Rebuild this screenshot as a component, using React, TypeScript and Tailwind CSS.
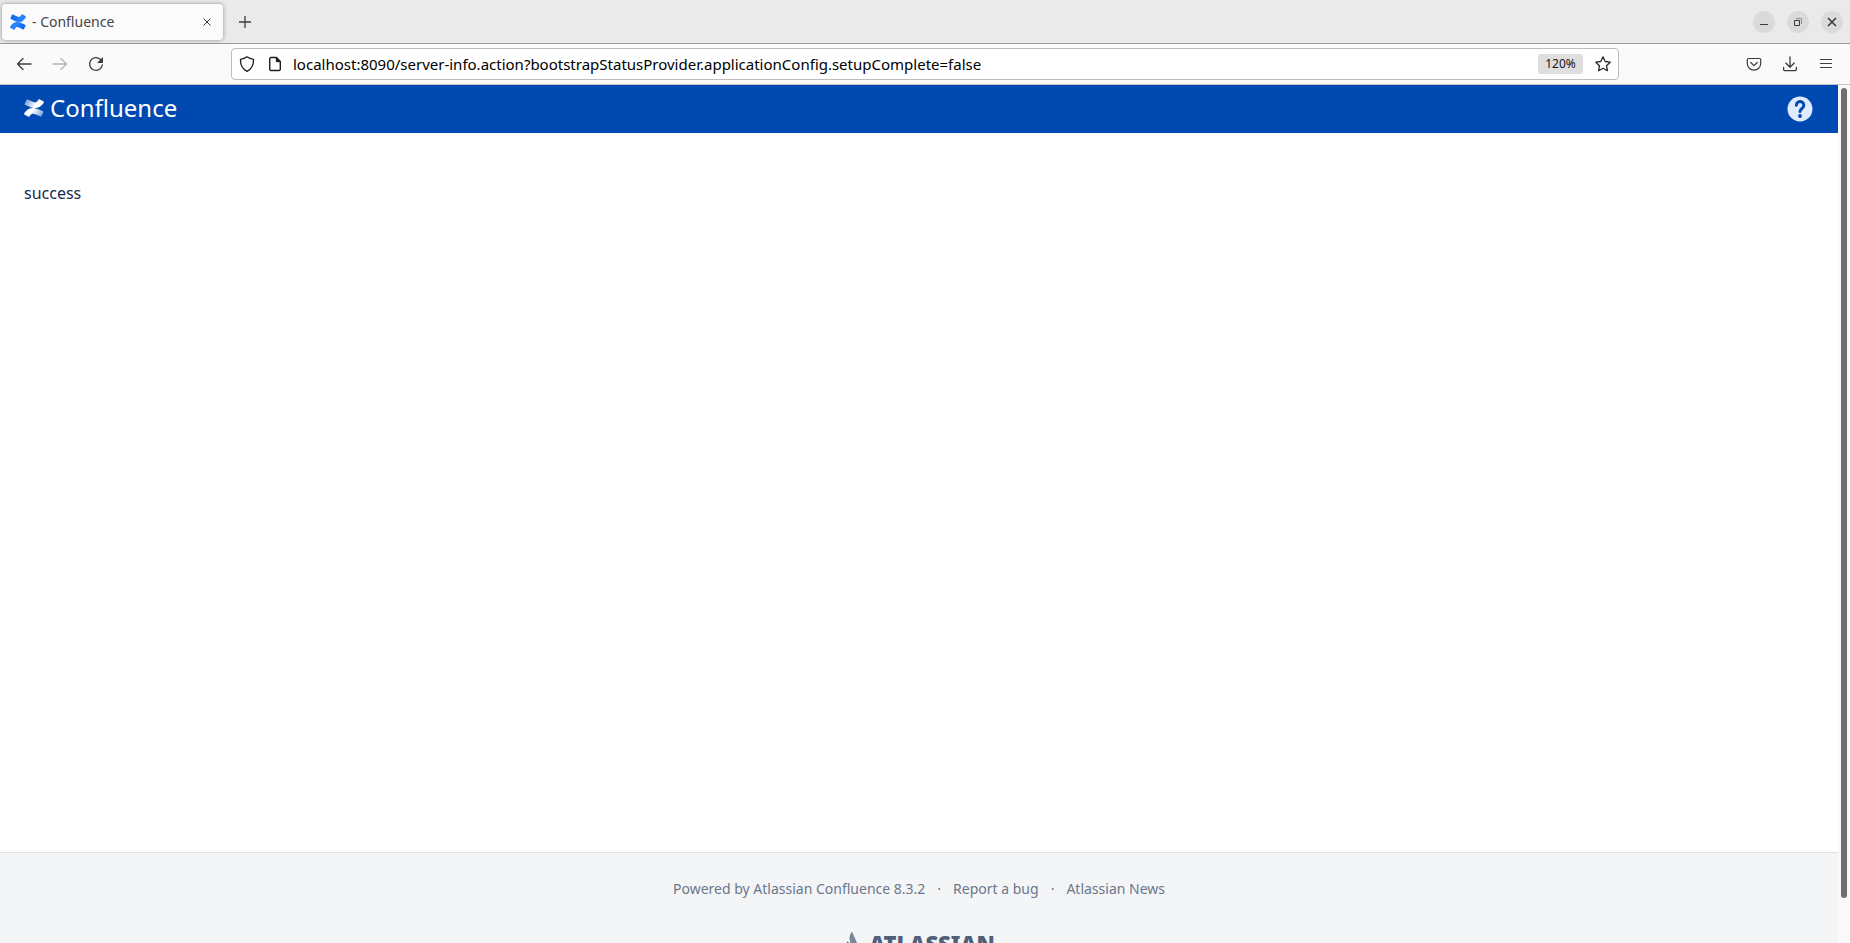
import { useState } from "react";

const ICON = "fill-none stroke-[#3c3c3f]";

function ConfluenceMark({ id, from, to, className }: { id: string; from: string; to: string; className: string }) {
  return (
    <svg className={className} viewBox="0 0 32 32" preserveAspectRatio="none" aria-hidden="true">
      <defs>
        <linearGradient id={`${id}-a`} x1="31" y1="33" x2="11" y2="20" gradientUnits="userSpaceOnUse">
          <stop offset="0.1" stopColor={from} />
          <stop offset="0.9" stopColor={to} />
        </linearGradient>
        <linearGradient id={`${id}-b`} x1="1" y1="-1" x2="21" y2="12" gradientUnits="userSpaceOnUse">
          <stop offset="0.1" stopColor={from} />
          <stop offset="0.9" stopColor={to} />
        </linearGradient>
      </defs>
      <path
        fill={`url(#${id}-a)`}
        d="M1.2 24.2c-.4.6-.8 1.3-1 1.8-.3.5-.1 1.2.4 1.5l6.700 4.100c.5.300 1.200.200 1.500-.4.300-.5.600-1.100 1-1.700 2.600-4.300 5.300-3.800 10-1.600l6.600 3.100c.6.300 1.200 0 1.500-.5l3.200-7.200c.200-.6 0-1.200-.6-1.500-1.400-.6-4.200-2-6.600-3.100C14.800 14.300 7.300 14.600 1.200 24.200z"
      />
      <path
        fill={`url(#${id}-b)`}
        d="M30.800 7.800c.4-.6.800-1.300 1-1.800.3-.5.100-1.200-.4-1.500L24.700.4c-.5-.3-1.200-.2-1.500.4-.3.500-.6 1.100-1 1.700-2.600 4.300-5.300 3.800-10 1.600L5.600 1c-.6-.3-1.200 0-1.500.5L.9 8.700c-.2.600 0 1.200.6 1.500 1.400.6 4.200 2 6.600 3.100 9.100 4.400 16.600 4.100 22.700-5.500z"
      />
    </svg>
  );
}

function TabStrip() {
  return (
    <div className="flex h-11 shrink-0 items-center border-b border-[#9c9c9c] bg-[#eaeaea] pl-0.5 pr-[7px]">
      <div className="flex h-9 w-[221px] items-center rounded bg-[#fbfbfb] pl-2 pr-1.5 shadow-[0_0_4px_rgba(0,0,0,0.4)]">
        <ConfluenceMark id="tab" from="#0c5fe8" to="#2684ff" className="h-4 w-4" />
        <span className="ml-1.5 flex-1 text-sm text-[#45454a]">- Confluence</span>
        <button aria-label="Close tab" className="flex h-5 w-5 items-center justify-center">
          <svg className={`h-2 w-2 ${ICON}`} viewBox="0 0 8 8"><path d="M.5.5l7 7M7.500.5l-7 7" /></svg>
        </button>
      </div>
      <button aria-label="New tab" className="ml-4 flex h-3 w-3 items-center justify-center">
        <svg className={`h-3 w-3 ${ICON}`} viewBox="0 0 12 12"><path strokeWidth="1.3" d="M6 0v12M0 6h12" /></svg>
      </button>
      <div className="ml-auto flex gap-3">
        <button aria-label="Minimize" className="flex h-[22px] w-[22px] items-center justify-center rounded-full bg-[#dadada]">
          <svg className={`h-3 w-3 ${ICON}`} viewBox="0 0 12 12"><path d="M2 8.500h8" /></svg>
        </button>
        <button aria-label="Restore" className="flex h-[22px] w-[22px] items-center justify-center rounded-full bg-[#dadada]">
          <svg className={`h-3 w-3 ${ICON}`} viewBox="0 0 12 12">
            <path d="M2.500 4.500h5v5h-5z" />
            <path className="stroke-[#8b8b8b]" d="M4 2.500h5.500V8" />
          </svg>
        </button>
        <button aria-label="Close window" className="flex h-[22px] w-[22px] items-center justify-center rounded-full bg-[#dadada]">
          <svg className={`h-3 w-3 ${ICON}`} viewBox="0 0 12 12"><path strokeWidth="1.6" d="M2 2l8 8M10 2l-8 8" /></svg>
        </button>
      </div>
    </div>
  );
}

function NavBar() {
  const [url, setUrl] = useState("localhost:8090/server-info.action?bootstrapStatusProvider.applicationConfig.setupComplete=false");

  return (
    <div className="flex h-[41px] shrink-0 items-center border-b border-[#c4c4c4] bg-[#fafafa] px-4">
      <div className="flex gap-5">
        <button aria-label="Back">
          <svg className={`h-4 w-4 ${ICON}`} viewBox="0 0 16 16"><path strokeWidth="1.3" strokeLinecap="round" strokeLinejoin="round" d="M15 8H1.500M7 2.500L1.500 8 7 13.500" /></svg>
        </button>
        <button aria-label="Forward" disabled>
          <svg className="h-4 w-4 fill-none stroke-[#b4b4b4]" viewBox="0 0 16 16"><path strokeWidth="1.3" strokeLinecap="round" strokeLinejoin="round" d="M1 8h13.500M9 2.500L14.500 8 9 13.500" /></svg>
        </button>
        <button aria-label="Reload">
          <svg className={`h-4 w-4 ${ICON}`} viewBox="0 0 16 16">
            <path strokeWidth="1.3" strokeLinecap="round" d="M14.300 9A6.400 6.400 0 1 1 12.500 3.500" />
            <path className="fill-[#3c3c3f] stroke-none" d="M15 1v5.500a.5.500 0 0 1-.5.500H9z" />
          </svg>
        </button>
      </div>

      <div className="mx-[127px] flex h-8 flex-1 items-center rounded border border-[#bdbdbd] bg-white px-[7px]">
        <svg className="h-4 w-4 fill-none stroke-[#1c1c1f]" viewBox="0 0 16 16">
          <path strokeWidth="1.3" strokeLinejoin="round" d="M8 .8c2 1.500 4 2.200 6.500 2.500.2 5.500-1.500 9.700-6.500 12C3 13 1.300 8.800 1.500 3.300 4 3 6 2.300 8 .8z" />
        </svg>
        <svg className="ml-3 h-4 w-4 fill-none stroke-[#1c1c1f]" viewBox="0 0 16 16">
          <path strokeWidth="1.4" strokeLinejoin="round" d="M9.500 1.500H4a1.300 1.300 0 0 0-1.300 1.300v10.400A1.300 1.300 0 0 0 4 14.500h8a1.300 1.300 0 0 0 1.300-1.300V5.500z" />
          <path className="fill-[#1c1c1f]" d="M9.300 1.800v3.900h3.900z" />
        </svg>
        <input
          aria-label="Address"
          className="ml-2.5 min-w-0 flex-1 bg-transparent text-[15px] text-black outline-none"
          value={url}
          onChange={(e) => setUrl(e.target.value)}
        />
        <button className="mr-3 h-5 w-[45px] rounded-[3px] bg-[#dedede] text-xs text-[#15141a]">120%</button>
        <button aria-label="Bookmark">
          <svg className="h-4 w-4 fill-none stroke-[#2b2b2e]" viewBox="0 0 16 16">
            <path strokeWidth="1.300" strokeLinejoin="round" d="M8 .9l2.200 4.600 5 .7-3.700 3.500.9 5L8 12.300l-4.400 2.400.9-5L.8 6.200l5-.7z" />
          </svg>
        </button>
      </div>

      <div className="flex gap-5">
        <button aria-label="Save to Pocket">
          <svg className={`h-4 w-4 ${ICON}`} viewBox="0 0 16 16">
            <path strokeWidth="1.2" strokeLinecap="round" strokeLinejoin="round" d="M2.500 2.500h11a1.200 1.200 0 0 1 1.200 1.200V7.500a6.700 6.700 0 0 1-13.400 0V3.700A1.200 1.200 0 0 1 2.500 2.500zM4.800 6.500L8 9.600l3.200-3.100" />
          </svg>
        </button>
        <button aria-label="Downloads">
          <svg className={`h-4 w-4 ${ICON}`} viewBox="0 0 16 16">
            <path strokeWidth="1.3" strokeLinecap="round" strokeLinejoin="round" d="M8 1v10M3.800 7L8 11.200 12.200 7M1.600 11.500v1.700a1.400 1.400 0 0 0 1.400 1.400h10a1.400 1.400 0 0 0 1.400-1.400v-1.700" />
          </svg>
        </button>
        <button aria-label="Menu">
          <svg className={`h-4 w-4 ${ICON}`} viewBox="0 0 16 16"><path strokeWidth="1.2" strokeLinecap="round" d="M2.500 3.500h11M2.500 7.500h11M2.500 11.500h11" /></svg>
        </button>
      </div>
    </div>
  );
}

function AppHeader() {
  return (
    <header className="flex h-12 items-center bg-[#0049b0] pl-6 pr-[25px]">
      <a href="#" className="flex items-center gap-1.5 pb-0.5 text-white">
        <ConfluenceMark id="brand" from="#6f9bdb" to="#ffffff" className="h-[18px] w-5" />
        <span className="text-2xl">Confluence</span>
      </a>
      <button aria-label="Help" className="ml-auto">
        <svg className="h-[26px] w-[26px]" viewBox="0 0 26 26">
          <circle cx="13" cy="13" r="12.500" fill="#deebff" />
          <path d="M9.400 9.200a3.700 3.700 0 1 1 5.900 3c-1.600 1.200-2.300 1.600-2.300 3.300" fill="none" stroke="#0049b0" strokeWidth="3" strokeLinecap="round" />
          <circle cx="13" cy="20" r="1.900" fill="#0049b0" />
        </svg>
      </button>
    </header>
  );
}

function Footer() {
  return (
    <footer className="flex flex-col items-center border-t border-[#dcdfe4] bg-[#f4f5f7] pb-8 pt-[26px] text-sm text-[#6b778c]">
      <ul className="flex gap-3">
        <li>Powered by <a href="#">Atlassian Confluence</a> 8.3.2</li>
        <li aria-hidden="true">·</li>
        <li><a href="#">Report a bug</a></li>
        <li aria-hidden="true">·</li>
        <li><a href="#">Atlassian News</a></li>
      </ul>
      <a href="#" className="mt-7 flex items-center gap-2 text-[#505f79]">
        <svg className="h-6 w-[18px]" viewBox="0 0 16 20" aria-hidden="true">
          <path fill="#505f79" d="M4.600 9a.5.500 0 0 0-.9.100L.1 17.800a.5.500 0 0 0 .5.700h5.200a.5.500 0 0 0 .5-.3c1.200-2.700.4-6.500-1.700-9.200z" />
          <path fill="#7a869a" d="M7.400.4C5.300 4 5.500 7.800 6.900 10.900l3.500 7.300a.5.500 0 0 0 .5.300h4.500a.5.500 0 0 0 .5-.7L8.300.4a.5.500 0 0 0-.9 0z" />
        </svg>
        <span className="text-[22px] leading-8 font-black">ATLASSIAN</span>
      </a>
    </footer>
  );
}

export default function App() {
  return (
    <div className="flex h-screen flex-col overflow-hidden bg-white font-['Noto_Sans',sans-serif]">
      <TabStrip />
      <NavBar />
      <div className="flex min-h-0 flex-1">
        <div className="min-w-0 flex-1 overflow-hidden">
          <AppHeader />
          <main className="min-h-[calc(100%-139px)] px-6 pt-12 text-base text-[#172b4d]">
            <p>success</p>
          </main>
          <Footer />
        </div>
        {/* scrollbar */}
        <div className="flex w-3 flex-col items-center bg-[#f9f9fa] pb-[45px] pt-[3px]">
          <div className="w-1.5 flex-1 rounded-full bg-[#6f6f6f]" />
        </div>
      </div>
    </div>
  );
}
